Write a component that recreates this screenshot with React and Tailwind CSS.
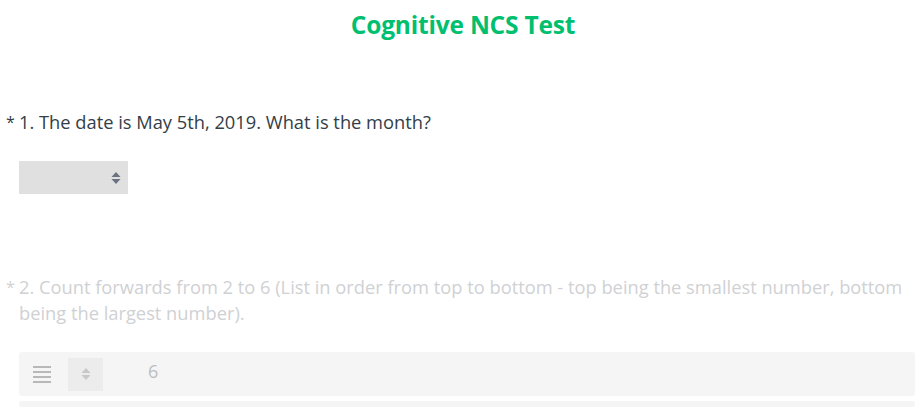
import React from 'react';

const Arrows = ({ color }) => (
  <svg width="10" height="14" viewBox="0 0 10 14" className="block">
    <path d="M5 1 L9.5 6 H0.5 Z" fill={color} />
    <path d="M5 13 L9.5 8 H0.5 Z" fill={color} />
  </svg>
);

const App = () => {
  return (
    <div className="h-screen bg-white font-['Open_Sans',sans-serif] overflow-hidden">
      {/* Title */}
      <h1 className="pt-[8px] text-center text-[24.5px] leading-[34px] font-bold text-[#00bf6f] tracking-[-0.2px] pl-[4px]">
        Cognitive NCS Test
      </h1>

      {/* Question 1 */}
      <div className="mt-[67px] flex pl-[6px] text-[18.3px] leading-[26px] text-[#333e48]">
        <span className="w-[13px] text-[16px]">*</span>
        <span>1. The date is May 5th, 2019. What is the month?</span>
      </div>
      <div className="ml-[19px] mt-[26px] w-[109px] h-[33px] bg-[#e0e0e0] flex items-center justify-end pr-[7px]">
        <Arrows color="#6b7280" />
      </div>

      {/* Question 2 */}
      <div className="mt-[80px] flex pl-[6px] pr-[6px] text-[18.3px] leading-[26px] text-[#cfd1d4]">
        <span className="w-[13px] shrink-0 text-[16px]">*</span>
        <span>
          2. Count forwards from 2 to 6 (List in order from top to bottom - top being the smallest number, bottom being the largest number).
        </span>
      </div>

      <div className="ml-[19px] mr-[7px] mt-[26px] flex flex-col gap-[5px]">
        <div className="h-[44px] bg-[#f5f5f5] rounded-[3px] flex items-center">
          <div className="ml-[14px] w-[18px] flex flex-col gap-[3px]">
            <div className="h-[2px] bg-[#b8b8b8]" />
            <div className="h-[2px] bg-[#b8b8b8]" />
            <div className="h-[2px] bg-[#b8b8b8]" />
            <div className="h-[2px] bg-[#b8b8b8]" />
          </div>
          <div className="ml-[17px] w-[35px] h-[33px] bg-[#ececec] flex items-center justify-center">
            <Arrows color="#c8c8c8" />
          </div>
          <span className="ml-[45px] mb-[6px] text-[18px] text-[#bdbdbd]">6</span>
        </div>
        <div className="h-[6px] bg-[#f5f5f5] rounded-[3px]" />
      </div>
    </div>
  );
};

export default App;
